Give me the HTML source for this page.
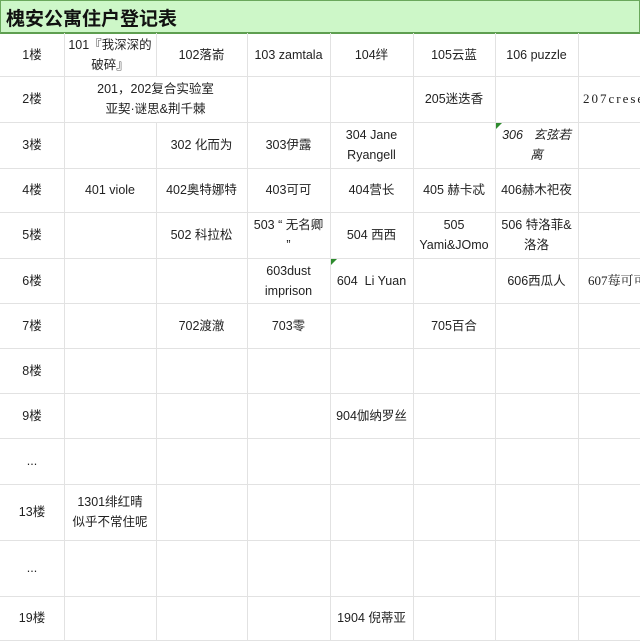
<!DOCTYPE html>
<html><head><meta charset="utf-8"><style>
body{margin:0;width:640px;height:640px;overflow:hidden;background:#fff;font-family:"Liberation Sans","Noto Sans CJK SC",sans-serif;color:#222;}
.t{position:absolute;left:0;top:0;width:638px;height:31px;background:#cdf7c8;border:1px solid #6aa85c;border-bottom:2px solid #5e9e50;}
.t span{position:absolute;left:5px;top:3px;font-size:19px;font-weight:bold;color:#111;}
.h{position:absolute;left:0;width:640px;height:1px;background:#e2e2e2}
.v{position:absolute;width:1px;background:#e2e2e2}
.c{position:absolute;display:flex;align-items:center;justify-content:center;text-align:center;font-size:12.5px;line-height:20px;}
.tri{position:absolute;width:0;height:0;border-top:6px solid #2e8b2e;border-right:6px solid transparent;}
</style></head><body>
<div class="t"><span>槐安公寓住户登记表</span></div>
<div id="g"></div>
<script>
var xs=[0,64,156,247,330,413,495,578,640];
var ys=[33,76,122,168,212,258,303,348,393,438,484,540,596,640];
var g=document.getElementById('g'),h='';
for(var i=1;i<ys.length;i++)h+='<div class="h" style="top:'+ys[i]+'px"></div>';
for(var j=1;j<xs.length-1;j++){
 if(j==2){h+='<div class="v" style="left:'+xs[j]+'px;top:33px;height:43px"></div><div class="v" style="left:'+xs[j]+'px;top:122px;height:518px"></div>';}
 else h+='<div class="v" style="left:'+xs[j]+'px;top:33px;height:607px"></div>';}
function c(r,col,txt,span,st){span=span||1;h+='<div class="c" style="left:'+xs[col]+'px;top:'+ys[r]+'px;width:'+(xs[col+span]-xs[col])+'px;height:'+(ys[r+1]-ys[r])+'px;'+(st||'')+'">'+txt+'</div>';}
var fl=['1楼','2楼','3楼','4楼','5楼','6楼','7楼','8楼','9楼','...','13楼','...','19楼'];
fl.forEach(function(f,i){c(i,0,f);});
c(0,1,'101『我深深的<br>破碎』');c(0,2,'102落嵛');c(0,3,'103 zamtala');c(0,4,'104绊');c(0,5,'105云蓝');c(0,6,'106 puzzle');
c(1,1,'201，202复合实验室<br>亚契·谜思&amp;荆千棘',2);c(1,5,'205迷迭香');
h+='<div class="c" style="left:583px;top:76px;height:46px;justify-content:flex-start;white-space:nowrap;font-family:\'Liberation Serif\',serif;letter-spacing:2px;font-size:13px">207cresent</div>';
c(2,2,'302 化而为');c(2,3,'303伊露');c(2,4,'304 Jane<br>Ryangell');c(2,6,'306&nbsp;&nbsp; 玄弦若<br>离','','font-style:italic');
c(3,1,'401 viole');c(3,2,'402奥特娜特');c(3,3,'403可可');c(3,4,'404营长');c(3,5,'405 赫卡忒');c(3,6,'406赫木祀夜');
c(4,2,'502 科拉松');c(4,3,'503 “ 无名卿<br>”');c(4,4,'504 西西');c(4,5,'505<br>Yami&amp;JOmo');c(4,6,'506 特洛菲&amp;<br>洛洛');
c(5,3,'603dust<br>imprison');c(5,4,'604&nbsp; Li Yuan');c(5,6,'606西瓜人');
h+='<div class="c" style="left:588px;top:258px;height:45px;justify-content:flex-start;white-space:nowrap;font-family:\'Liberation Serif\',\'Noto Serif CJK SC\',serif;font-size:13px">607莓可可</div>';
c(6,2,'702渡澈');c(6,3,'703零');c(6,5,'705百合');
c(8,4,'904伽纳罗丝');
c(10,1,'1301绯红晴<br>似乎不常住呢');
c(12,4,'1904 倪蒂亚');
h+='<div class="tri" style="left:496px;top:123px"></div><div class="tri" style="left:331px;top:259px"></div>';
g.innerHTML=h;
</script>
</body></html>
